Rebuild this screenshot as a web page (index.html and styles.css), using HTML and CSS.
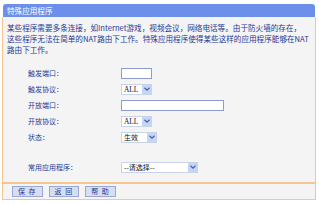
FILE: index.html
```html
<!DOCTYPE html>
<html lang="zh-CN">
<head>
<meta charset="utf-8">
<title>特殊应用程序</title>
<link rel="stylesheet" href="styles.css">
</head>
<body>
<div class="panel">
  <div class="title">特殊应用程序</div>
  <div class="body">
    <p class="desc">某些程序需要多条连接，如Internet游戏，视频会议，网络电话等。由于防火墙的存在，<br>这些程序无法在简单的NAT路由下工作。特殊应用程序使得某些这样的应用程序能够在NAT<br>路由下工作。</p>
    <div class="form">
      <div class="row"><span class="label">触发端口：</span><span class="input short"></span></div>
      <div class="row"><span class="label">触发协议：</span><span class="select s-all"><span class="val">ALL</span><span class="arrow"><svg width="6" height="4" viewBox="0 0 6 4"><path d="M0.5 0.8 L3 3.2 L5.5 0.8" fill="none" stroke="#3e63b8" stroke-width="1.2"/></svg></span></span></div>
      <div class="row"><span class="label">开放端口：</span><span class="input long"></span></div>
      <div class="row"><span class="label">开放协议：</span><span class="select s-all"><span class="val">ALL</span><span class="arrow"><svg width="6" height="4" viewBox="0 0 6 4"><path d="M0.5 0.8 L3 3.2 L5.5 0.8" fill="none" stroke="#3e63b8" stroke-width="1.2"/></svg></span></span></div>
      <div class="row"><span class="label">状态：</span><span class="select s-state"><span class="val">生效</span><span class="arrow"><svg width="6" height="4" viewBox="0 0 6 4"><path d="M0.5 0.8 L3 3.2 L5.5 0.8" fill="none" stroke="#3e63b8" stroke-width="1.2"/></svg></span></span></div>
      <div class="row gap"><span class="label">常用应用程序：</span><span class="select s-app"><span class="val">--请选择--</span><span class="arrow"><svg width="6" height="4" viewBox="0 0 6 4"><path d="M0.5 0.8 L3 3.2 L5.5 0.8" fill="none" stroke="#3e63b8" stroke-width="1.2"/></svg></span></span></div>
    </div>
  </div>
  <div class="buttons">
    <span class="btn">保 存</span>
    <span class="btn">返 回</span>
    <span class="btn">帮 助</span>
  </div>
</div>
</body>
</html>
```

FILE: styles.css
```css
html, body {
  margin: 0;
  padding: 0;
  background: #ffffff;
}
body {
  font-family: "Noto Sans CJK SC", "Noto Sans", sans-serif;
  color: #1c3a96;
}
.panel {
  margin: 4px 0 0 2px;
  width: 314px;
}
.title {
  height: 13px;
  margin-left: 1px;
  margin-right: 1px;
  background: #6c90ea;
  color: #ffffff;
  font-size: 7.6px;
  line-height: 13px;
  padding-left: 4px;
  border-radius: 3px 3px 0 0;
}
.body {
  border-left: 1px solid #f6c690;
  border-right: 1px solid #f6c690;
  border-bottom: 2px solid #f6c690;
  background: #f4f4f4;
  height: 165px;
  box-sizing: border-box;
  height: 167px;
}
.desc {
  margin: 0;
  padding: 5px 0 0 4px;
  font-size: 7.6px;
  line-height: 11px;
  color: #1c3a96;
  white-space: nowrap;
}
.form {
  display: flex;
  flex-direction: column;
  margin-top: 10px;
}
.row {
  display: flex;
  align-items: center;
  height: 16px;
}
.row.gap {
  margin-top: 14px;
}
.label {
  width: 93px;
  padding-left: 25px;
  font-size: 7px;
  color: #1c3a96;
}
.input {
  display: block;
  height: 11px;
  box-sizing: border-box;
  border: 1px solid #8d9ccf;
  background: #ffffff;
}
.input.short { width: 31px; }
.input.long { width: 103px; }
.select {
  display: flex;
  align-items: stretch;
  height: 11px;
  box-sizing: border-box;
  border: 1px solid #c9d2e6;
  background: #ffffff;
  color: #111111;
  font-size: 7px;
}
.select .val {
  flex: 1;
  padding-left: 2px;
  line-height: 9px;
  font-family: "Liberation Serif", "Noto Sans CJK SC", serif;
  font-size: 7.4px;
}
.s-state .val, .s-app .val {
  font-family: "Noto Sans CJK SC", sans-serif;
  font-size: 7px;
}
.select .arrow {
  width: 9px;
  margin: 0 0 0 0;
  background: #c6d5f2;
  display: flex;
  align-items: center;
  justify-content: center;
}
.s-all { width: 31px; }
.s-state { width: 36px; }
.s-app { width: 77px; }
.buttons {
  display: flex;
  gap: 6px;
  align-items: center;
  height: 15px;
  padding-left: 9px;
  border-left: 1px solid #f6c690;
  border-right: 1px solid #f6c690;
  border-bottom: 1px solid #f6c690;
  background: #f4f4f4;
}
.btn {
  display: block;
  height: 11px;
  box-sizing: border-box;
  padding: 0 5px;
  border: 1px solid #9aa9d3;
  background: #d7def2;
  color: #1c3a96;
  font-size: 7px;
  line-height: 9px;
  letter-spacing: 1px;
}
```
